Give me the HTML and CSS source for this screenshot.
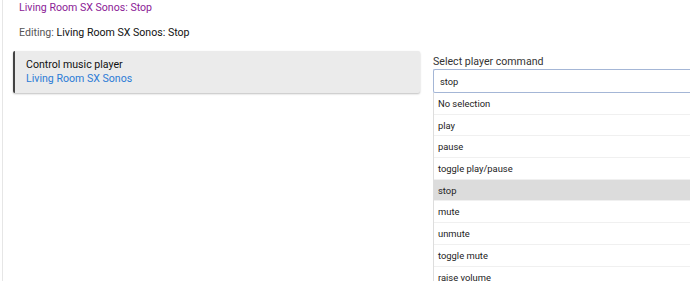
FILE: index.html
```html
<!DOCTYPE html>
<html lang="en">
<head>
    <meta charset="UTF-8">
    <title>Living Room SX Sonos: Stop</title>
    <link rel="stylesheet" href="styles.css">
</head>
<body>
    <div class="page">
        <div class="title">Living Room SX Sonos: Stop</div>
        <div class="editing">Editing: <span class="name">Living Room SX Sonos: Stop</span></div>
        <div class="row">
            <div class="action-card">
                <div class="action-type">Control music player</div>
                <div class="action-device">Living Room SX Sonos</div>
            </div>
            <div class="command">
                <label class="command-label" for="command-input">Select player command</label>
                <input id="command-input" class="command-input" type="text" value="stop">
                <ul class="options">
                    <li>No selection</li>
                    <li>play</li>
                    <li>pause</li>
                    <li>toggle play/pause</li>
                    <li class="selected">stop</li>
                    <li>mute</li>
                    <li>unmute</li>
                    <li>toggle mute</li>
                    <li>raise volume</li>
                </ul>
            </div>
        </div>
    </div>
</body>
</html>
```
FILE: styles.css
```css
body {
    margin: 0;
    padding: 0;
    font-family: Roboto, "Liberation Sans", sans-serif;
    background-color: white;
    overflow: hidden;
}

.page {
    height: 281px;
    margin-left: 2px;
    border-left: 1px solid #e6e6e6;
    padding-left: 10px;
}

.title {
    color: #8b1a96;
    font-size: 10.6px;
    padding: 1px 0 0 6px;
    line-height: 14px;
}

.editing {
    color: #555;
    font-size: 10.6px;
    padding: 11px 0 0 6px;
    line-height: 14px;
}

.editing .name {
    color: #111;
}

.row {
    display: flex;
    margin-top: 11px;
}

.action-card {
    flex-shrink: 0;
    width: 407px;
    height: 42px;
    box-sizing: border-box;
    background-color: #ebebeb;
    border-left: 2px solid #444;
    border-radius: 2px;
    box-shadow: 0 1px 2px rgba(0, 0, 0, 0.25);
    padding: 7px 0 0 11px;
}

.action-type {
    font-size: 10.6px;
    color: #111;
    line-height: 14px;
}

.action-device {
    font-size: 10.6px;
    color: #2b7bd6;
    line-height: 14px;
}

.command {
    flex-shrink: 0;
    width: 257px;
    margin-left: 13px;
    margin-top: 4px;
}

.command-label {
    display: block;
    font-size: 10.6px;
    color: #333;
    line-height: 14px;
}

.command-input {
    display: block;
    width: 100%;
    height: 24px;
    box-sizing: border-box;
    margin: 0;
    border: 1px solid #a4b6d6;
    border-right: none;
    border-radius: 2px 0 0 2px;
    padding: 0 6px;
    font-family: Roboto, "Liberation Sans", sans-serif;
    font-size: 9.3px;
    color: #222;
}

.options {
    list-style: none;
    margin: 0;
    padding: 0;
    border-left: 1px solid #ddd;
}

.options li {
    height: 21.7px;
    line-height: 21px;
    padding-left: 4px;
    font-size: 9.4px;
    color: #222;
    border-bottom: 1px solid #f0f0f0;
    box-sizing: border-box;
}

.options li.selected {
    background-color: #dcdcdc;
}
```
